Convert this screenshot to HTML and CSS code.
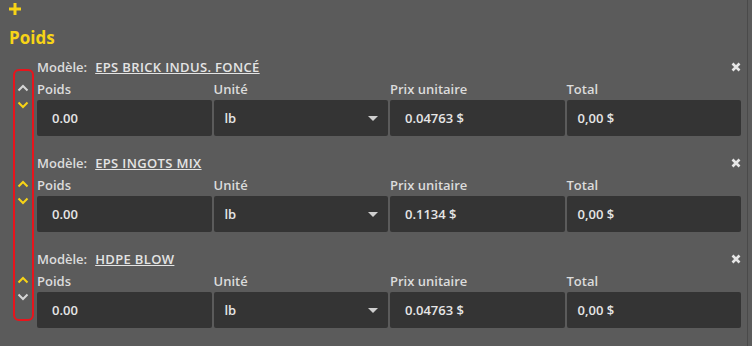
FILE: index.html
```html
<!DOCTYPE html>
<html>
<head>
	<meta charset="utf-8">
	<title>Poids</title>
	<link rel="stylesheet" href="styles.css">
</head>
<body>
	<div class="panel">
		<div class="add"><svg width="12" height="12" viewBox="0 0 12 12"><path d="M6 0 V12 M0 6 H12"/></svg></div>
		<h2 class="section-title">Poids</h2>

		<div class="items">
			<div class="order-box"></div>

			<div class="item">
				<div class="mover">
					<svg class="chev off" width="12" height="8" viewBox="0 0 12 8"><path d="M1.5 6.5 L6 2 L10.5 6.5"/></svg>
					<svg class="chev" width="12" height="8" viewBox="0 0 12 8"><path d="M1.5 1.5 L6 6 L10.5 1.5"/></svg>
				</div>
				<div class="item-body">
					<div class="item-head">
						<span class="model-label">Modèle:</span>
						<a class="model-link" href="#">EPS BRICK INDUS. FONCÉ</a>
						<svg class="close" width="10" height="10" viewBox="0 0 10 10"><path d="M1.5 1.5 L8.5 8.5 M8.5 1.5 L1.5 8.5"/></svg>
					</div>
					<div class="fields">
						<div class="field"><label>Poids</label><div class="box pad-a">0.00</div></div>
						<div class="field"><label>Unité</label><div class="box select">lb<svg width="10" height="5" viewBox="0 0 10 5"><path d="M0 0 L10 0 L5 5 Z"/></svg></div></div>
						<div class="field"><label>Prix unitaire</label><div class="box pad-a">0.04763 $</div></div>
						<div class="field"><label>Total</label><div class="box">0,00 $</div></div>
					</div>
				</div>
			</div>

			<div class="item">
				<div class="mover">
					<svg class="chev" width="12" height="8" viewBox="0 0 12 8"><path d="M1.5 6.5 L6 2 L10.5 6.5"/></svg>
					<svg class="chev" width="12" height="8" viewBox="0 0 12 8"><path d="M1.5 1.5 L6 6 L10.5 1.5"/></svg>
				</div>
				<div class="item-body">
					<div class="item-head">
						<span class="model-label">Modèle:</span>
						<a class="model-link" href="#">EPS INGOTS MIX</a>
						<svg class="close" width="10" height="10" viewBox="0 0 10 10"><path d="M1.5 1.5 L8.5 8.5 M8.5 1.5 L1.5 8.5"/></svg>
					</div>
					<div class="fields">
						<div class="field"><label>Poids</label><div class="box pad-a">0.00</div></div>
						<div class="field"><label>Unité</label><div class="box select">lb<svg width="10" height="5" viewBox="0 0 10 5"><path d="M0 0 L10 0 L5 5 Z"/></svg></div></div>
						<div class="field"><label>Prix unitaire</label><div class="box pad-a">0.1134 $</div></div>
						<div class="field"><label>Total</label><div class="box">0,00 $</div></div>
					</div>
				</div>
			</div>

			<div class="item">
				<div class="mover">
					<svg class="chev" width="12" height="8" viewBox="0 0 12 8"><path d="M1.5 6.5 L6 2 L10.5 6.5"/></svg>
					<svg class="chev off" width="12" height="8" viewBox="0 0 12 8"><path d="M1.5 1.5 L6 6 L10.5 1.5"/></svg>
				</div>
				<div class="item-body">
					<div class="item-head">
						<span class="model-label">Modèle:</span>
						<a class="model-link" href="#">HDPE BLOW</a>
						<svg class="close" width="10" height="10" viewBox="0 0 10 10"><path d="M1.5 1.5 L8.5 8.5 M8.5 1.5 L1.5 8.5"/></svg>
					</div>
					<div class="fields">
						<div class="field"><label>Poids</label><div class="box pad-a">0.00</div></div>
						<div class="field"><label>Unité</label><div class="box select">lb<svg width="10" height="5" viewBox="0 0 10 5"><path d="M0 0 L10 0 L5 5 Z"/></svg></div></div>
						<div class="field"><label>Prix unitaire</label><div class="box pad-a">0.04763 $</div></div>
						<div class="field"><label>Total</label><div class="box">0,00 $</div></div>
					</div>
				</div>
			</div>
		</div>
	</div>
</body>
</html>
```

FILE: styles.css
```css
* {
	margin: 0;
	padding: 0;
	box-sizing: border-box;
}

body {
	background-color: #5b5b5b;
	font-family: "Open Sans", sans-serif;
	color: #e2e2e2;
}

.panel {
	width: 748px;
	height: 346px;
	border-right: 1px solid #4a4a4a;
	padding-left: 9px;
}

.add {
	height: 20px;
	padding-top: 3px;
}

.add svg {
	display: block;
}

.add path {
	stroke: #f7d417;
	stroke-width: 3;
}

.section-title {
	color: #f7d417;
	font-size: 17px;
	font-weight: 700;
	line-height: 36px;
	height: 36px;
}

.items {
	position: relative;
}

.order-box {
	position: absolute;
	left: 4px;
	top: 13px;
	width: 21px;
	height: 252px;
	border: 2px solid #e8141c;
	border-radius: 6px;
}

.item {
	display: flex;
	height: 96px;
}

.mover {
	width: 28px;
	display: flex;
	flex-direction: column;
	align-items: center;
	padding-top: 28px;
	gap: 9px;
}

.chev path {
	fill: none;
	stroke: #f7d417;
	stroke-width: 2;
}

.chev.off path {
	stroke: #d6d6d6;
}

.item-body {
	flex: 1;
}

.item-head {
	display: flex;
	align-items: center;
	height: 22px;
	font-size: 13px;
	font-weight: 600;
}

.model-label {
	color: #dcdcdc;
	margin-right: 8px;
}

.model-link {
	color: #e4e4e4;
	text-decoration: underline;
	letter-spacing: 0.35px;
}

.close {
	margin-left: auto;
	margin-right: 6px;
}

.close path {
	stroke: #e6e6e6;
	stroke-width: 2.6;
}

.fields {
	display: flex;
	gap: 2px;
	width: 704px;
}

.field {
	flex: 1;
}

.field label {
	display: block;
	height: 22px;
	line-height: 22px;
	font-size: 13px;
	font-weight: 600;
	color: #dcdcdc;
}

.box {
	height: 36px;
	background: #343434;
	border-radius: 2px;
	display: flex;
	align-items: center;
	padding: 0 11px;
	font-size: 13px;
	font-weight: 600;
	color: #e6e6e6;
}

.box.pad-a {
	padding-left: 15px;
}

.select {
	justify-content: space-between;
	padding-right: 10px;
}

.select path {
	fill: #cfcfcf;
}
```
